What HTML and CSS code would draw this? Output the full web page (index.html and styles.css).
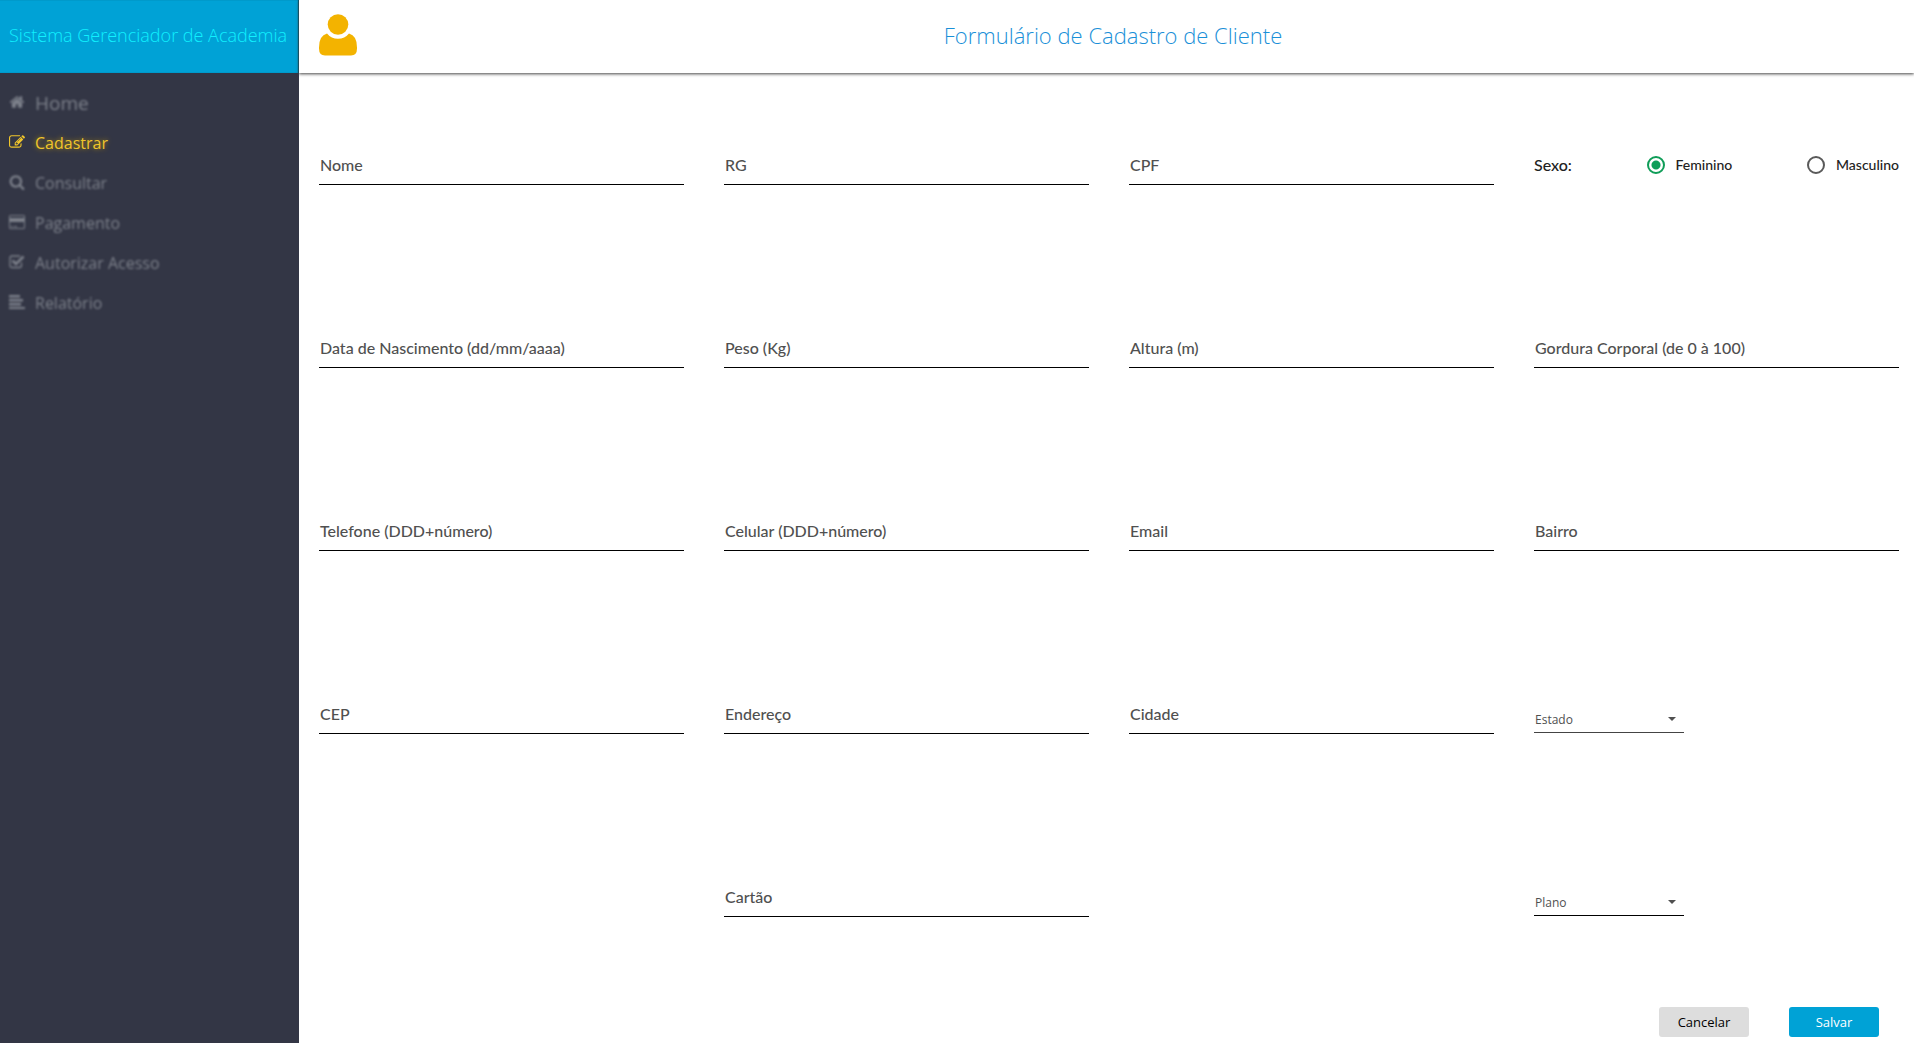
FILE: index.html
```html
<!DOCTYPE html>
<html lang="pt-BR">
<head>
<meta charset="utf-8">
<meta name="viewport" content="width=device-width, initial-scale=1">
<title>Sistema Gerenciador de Academia</title>
<link rel="stylesheet" href="styles.css">
</head>
<body>
<div class="app">
  <aside class="sidebar">
    <div class="brand">Sistema Gerenciador de Academia</div>
    <nav class="menu">
      <a class="menu-item menu-item-large" href="#"><svg class="menu-icon" viewBox="0 0 1792 1792"><path d="M1472 992v480q0 26-19 45t-45 19h-384v-384h-256v384h-384q-26 0-45-19t-19-45v-480q0-1 .5-3t.5-3l575-474 575 474q1 2 1 6zm223-69l-62 74q-8 9-21 11h-3q-13 0-21-7l-692-577-692 577q-12 8-24 7-13-2-21-11l-62-74q-8-10-7-23.5t11-21.5l719-599q32-26 76-26t76 26l244 204v-195q0-14 9-23t23-9h192q14 0 23 9t9 23v408l219 182q10 8 11 21.5t-7 23.5z"/></svg>Home</a>
      <a class="menu-item active" href="#"><svg class="menu-icon" viewBox="0 0 1792 1792"><path d="M888 1184l116-116-152-152-116 116v56h96v96h56zm440-720q-16-16-33 1l-350 350q-17 17-1 33t33-1l350-350q17-17 1-33zm80 594v190q0 119-84.5 203.5t-203.5 84.5h-832q-119 0-203.5-84.5t-84.5-203.5v-832q0-119 84.5-203.5t203.5-84.5h832q63 0 117 25 15 7 18 23 3 17-9 29l-49 49q-14 14-32 8-23-6-45-6h-832q-66 0-113 47t-47 113v832q0 66 47 113t113 47h832q66 0 113-47t47-113v-126q0-13 9-22l64-64q15-15 35-7t20 29zm-96-738l288 288-672 672h-288v-288zm444 132l-92 92-288-288 92-92q28-28 68-28t68 28l152 152q28 28 28 68t-28 68z"/></svg>Cadastrar</a>
      <a class="menu-item" href="#"><svg class="menu-icon" viewBox="0 0 1792 1792"><path d="M1216 832q0-185-131.5-316.5t-316.5-131.5-316.5 131.5-131.5 316.5 131.5 316.5 316.5 131.5 316.5-131.5 131.5-316.5zm512 832q0 52-38 90t-90 38q-54 0-90-38l-343-342q-179 124-399 124-143 0-273.5-55.5t-225-150-150-225-55.5-273.5 55.5-273.5 150-225 225-150 273.5-55.5 273.5 55.5 225 150 150 225 55.5 273.5q0 220-124 399l343 343q37 37 37 90z"/></svg>Consultar</a>
      <a class="menu-item" href="#"><svg class="menu-icon" viewBox="0 0 16 16"><path fill-rule="evenodd" d="M1.500 1h13q1.500 0 1.500 1.500v11q0 1.500-1.500 1.500h-13q-1.500 0-1.500-1.500v-11q0-1.500 1.500-1.500zM1 2.500v1.500h14v-1.500q0-.5-.5-.5h-13q-.5 0-.5.5zM1 8v5.500q0 .5.500.5h13q.5 0 .5-.5v-5.500zM2 12h2v1h-2zM5 12h3v1h-3z"/></svg>Pagamento</a>
      <a class="menu-item" href="#"><svg class="menu-icon" viewBox="0 0 16 16"><path d="M12.500 8.500v3q0 2-2 2h-7.500q-2 0-2-2v-7.500q0-2 2-2h8" fill="none" stroke="currentColor" stroke-width="1.300"/><path d="M3.500 6.500l3.500 3.500 7.500-7.500" fill="none" stroke="currentColor" stroke-width="2.600"/></svg>Autorizar Acesso</a>
      <a class="menu-item" href="#"><svg class="menu-icon" viewBox="0 0 16 16"><path d="M0 1h11v2.500H0zM0 5h14v2.500H0zM0 9h12v2.500H0zM0 13h16v2H0z"/></svg>Relatório</a>
    </nav>
  </aside>
  <main class="content">
    <header class="topbar">
      <svg class="user-icon" viewBox="0 0 38 42" aria-hidden="true"><circle cx="19" cy="10.500" r="10.300"/><path d="M8 19.500a14 14 0 0 0 22 0q8 2 8 14v1q0 7-6 7H6q-6 0-6-7v-1q0-12 8-14z"/></svg>
      <h1 class="title">Formulário de Cadastro de Cliente</h1>
    </header>
    <form class="form">
      <div class="fields">
        <div class="field"><label for="nome">Nome</label><input id="nome" type="text"></div>
        <div class="field"><label for="rg">RG</label><input id="rg" type="text"></div>
        <div class="field"><label for="cpf">CPF</label><input id="cpf" type="text"></div>
        <div class="gender" role="radiogroup" aria-labelledby="sexo">
          <span id="sexo">Sexo:</span>
          <label class="choice"><input type="radio" name="sexo" checked>Feminino</label>
          <label class="choice"><input type="radio" name="sexo">Masculino</label>
        </div>
        <div class="field"><label for="nascimento">Data de Nascimento (dd/mm/aaaa)</label><input id="nascimento" type="text"></div>
        <div class="field"><label for="peso">Peso (Kg)</label><input id="peso" type="text"></div>
        <div class="field"><label for="altura">Altura (m)</label><input id="altura" type="text"></div>
        <div class="field"><label for="gordura">Gordura Corporal (de 0 à 100)</label><input id="gordura" type="text"></div>
        <div class="field"><label for="telefone">Telefone (DDD+número)</label><input id="telefone" type="text"></div>
        <div class="field"><label for="celular">Celular (DDD+número)</label><input id="celular" type="text"></div>
        <div class="field"><label for="email">Email</label><input id="email" type="email"></div>
        <div class="field"><label for="bairro">Bairro</label><input id="bairro" type="text"></div>
        <div class="field"><label for="cep">CEP</label><input id="cep" type="text"></div>
        <div class="field"><label for="endereco">Endereço</label><input id="endereco" type="text"></div>
        <div class="field"><label for="cidade">Cidade</label><input id="cidade" type="text"></div>
        <div class="picker picker-soft"><select aria-label="Estado"><option>Estado</option></select></div>
        <div class="field field-card"><label for="cartao">Cartão</label><input id="cartao" type="text"></div>
        <div class="picker picker-plan"><select aria-label="Plano"><option>Plano</option></select></div>
      </div>
      <div class="actions">
        <button class="btn" type="reset">Cancelar</button>
        <button class="btn btn-primary" type="submit">Salvar</button>
      </div>
    </form>
  </main>
</div>
</body>
</html>
```
FILE: styles.css
```css
* { box-sizing: border-box; }

body {
  margin: 0;
  font-family: "Open Sans", "Noto Sans", sans-serif;
  background: #fff;
}

.app {
  display: grid;
  grid-template-columns: 299px 1fr;
  min-height: 100vh;
}

.sidebar { background: #333645; }

.brand {
  height: 73px;
  padding: 0 0 4px 9px;
  display: flex;
  align-items: center;
  background: #00a2d6;
  box-shadow: inset -1px 0 1px #02506b;
  color: #10f0ff;
  font-size: 18px;
  font-weight: 300;
  white-space: nowrap;
}

.menu {
  display: flex;
  flex-direction: column;
  padding: 10px 9px;
}

.menu-item {
  display: flex;
  align-items: center;
  gap: 10px;
  height: 40px;
  color: #7d818b;
  font-size: 16px;
  text-decoration: none;
  filter: blur(1px);
}

.menu-item-large { font-size: 19px; }

.menu-item.active {
  color: #f0c52b;
  filter: none;
  text-shadow: 0 0 5px #b28e10;
}

.menu-icon {
  width: 16px;
  height: 16px;
  margin-bottom: 2px;
  fill: currentColor;
}

.topbar {
  display: flex;
  align-items: center;
  height: 73px;
  padding: 0 45px 4px 20px;
  box-shadow: 0 1px 3px #444;
}

.user-icon {
  width: 38px;
  height: 42px;
  fill: #f3b300;
}

.title {
  flex: 1;
  margin: 0;
  color: #1a90d8;
  font-size: 22px;
  font-weight: 300;
  text-align: center;
}

.form { padding: 74px 15px 5px 20px; }

.fields {
  display: grid;
  grid-template-columns: repeat(4, 1fr);
  gap: 145px 40px;
}

.field,
.picker {
  display: grid;
  height: 38px;
}

.field label,
.field input {
  grid-area: 1 / 1;
}

.field label {
  align-self: center;
  padding: 0 0 2px 1px;
  color: #505050;
  font: 500 16px/20px Lato, sans-serif;
  pointer-events: none;
}

.field input {
  width: 100%;
  padding: 0 1px;
  border: 0;
  border-bottom: 1px solid #000;
  background: transparent;
  font: 16px Lato, sans-serif;
  outline: none;
}

.field-card { grid-column: 2; }

.gender {
  display: flex;
  align-items: center;
  justify-content: space-between;
  padding-bottom: 2px;
  color: #222;
  font: 500 16px/20px Lato, sans-serif;
}

.choice {
  display: flex;
  align-items: center;
  gap: 11px;
  font-size: 14px;
}

.choice input {
  appearance: none;
  width: 18px;
  height: 18px;
  margin: 0;
  border: 2px solid #5a5a5a;
  border-radius: 50%;
}

.choice input:checked {
  border-color: #0f9d58;
  background: radial-gradient(circle, #0f9d58 4px, transparent 5px);
}

.picker {
  width: 150px;
  height: 37px;
  border-bottom: 1px solid #000;
}

.picker-soft { border-color: #444; }

.picker-plan { grid-column: 4; }

.picker select,
.picker::after {
  grid-area: 1 / 1;
}

.picker select {
  appearance: none;
  width: 100%;
  height: 26px;
  align-self: end;
  padding: 0 1px;
  border: 0;
  background: transparent;
  color: #505050;
  font: 12px "Open Sans", sans-serif;
}

.picker::after {
  content: "";
  align-self: end;
  justify-self: end;
  margin: 0 8px 11px 0;
  border: 4px solid transparent;
  border-top-color: #505050;
  border-bottom: 0;
  pointer-events: none;
}

.actions {
  display: flex;
  justify-content: flex-end;
  gap: 40px;
  padding: 90px 20px 0 0;
}

.btn {
  width: 90px;
  height: 30px;
  padding: 0;
  border: 0;
  border-radius: 3px;
  background: #ddd;
  color: #000;
  font: 13px "Open Sans", sans-serif;
}

.btn-primary {
  background: #00a2d6;
  color: #fff;
}
```
